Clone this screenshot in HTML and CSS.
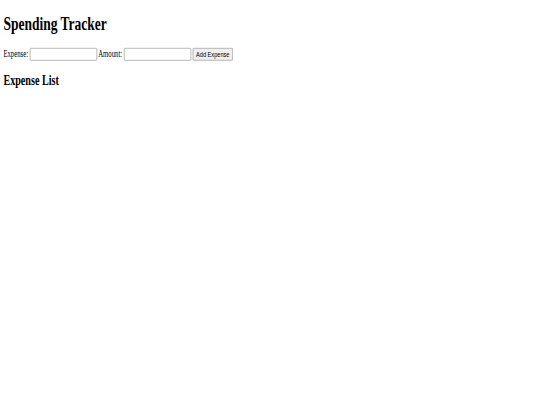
FILE: index.html
```html
<!DOCTYPE html>
<html lang="en">
<head>
<meta charset="utf-8">
<title>Spending Tracker</title>
<link rel="stylesheet" href="styles.css">
</head>
<body>
<div class="page">
  <h1 class="title">Spending Tracker</h1>
  <form class="expense-form">
    <label class="field-label" for="expense">Expense:</label>
    <input class="field-input" id="expense" type="text">
    <label class="field-label" for="amount">Amount:</label>
    <input class="field-input" id="amount" type="number">
    <button class="add-btn" type="button">Add Expense</button>
  </form>
  <h2 class="list-title">Expense List</h2>
  <ul class="expense-list"></ul>
</div>
</body>
</html>
```
FILE: styles.css
```css
html, body {
  margin: 0;
  background: #ffffff;
  overflow: hidden;
}

.page {
  display: flow-root;
  width: 560px;
  box-sizing: border-box;
  padding: 0 8px;
  font-family: "Liberation Serif", "Times New Roman", serif;
  font-size: 16px;
  color: #000000;
  transform: scale(0.421875, 0.6);
  transform-origin: 0 0;
}

.title {
  font-size: 32px;
  font-weight: bold;
  margin: 21.44px 0;
}

.expense-form {
  margin: 0;
  white-space: nowrap;
}

.field-label {
  font-size: 16px;
}

.field-input {
  font-family: "Liberation Sans", Arial, sans-serif;
  font-size: 13.333px;
  width: 159px;
  height: 21px;
  padding: 1px 2px;
  border: 1px solid #767676;
  border-radius: 2px;
  box-sizing: border-box;
  background: #ffffff;
  -moz-appearance: textfield;
  appearance: textfield;
}

.field-input::-webkit-outer-spin-button,
.field-input::-webkit-inner-spin-button {
  -webkit-appearance: none;
  margin: 0;
}

.add-btn {
  font-family: "Liberation Sans", Arial, sans-serif;
  font-size: 13.333px;
  height: 21px;
  padding: 1px 7px;
  border: 1px solid #767676;
  border-radius: 2px;
  background: #efefef;
  color: #000000;
}

.list-title {
  font-size: 24px;
  font-weight: bold;
  margin: 19.92px 0;
}

.expense-list {
  margin: 16px 0;
  padding-left: 40px;
}
```
